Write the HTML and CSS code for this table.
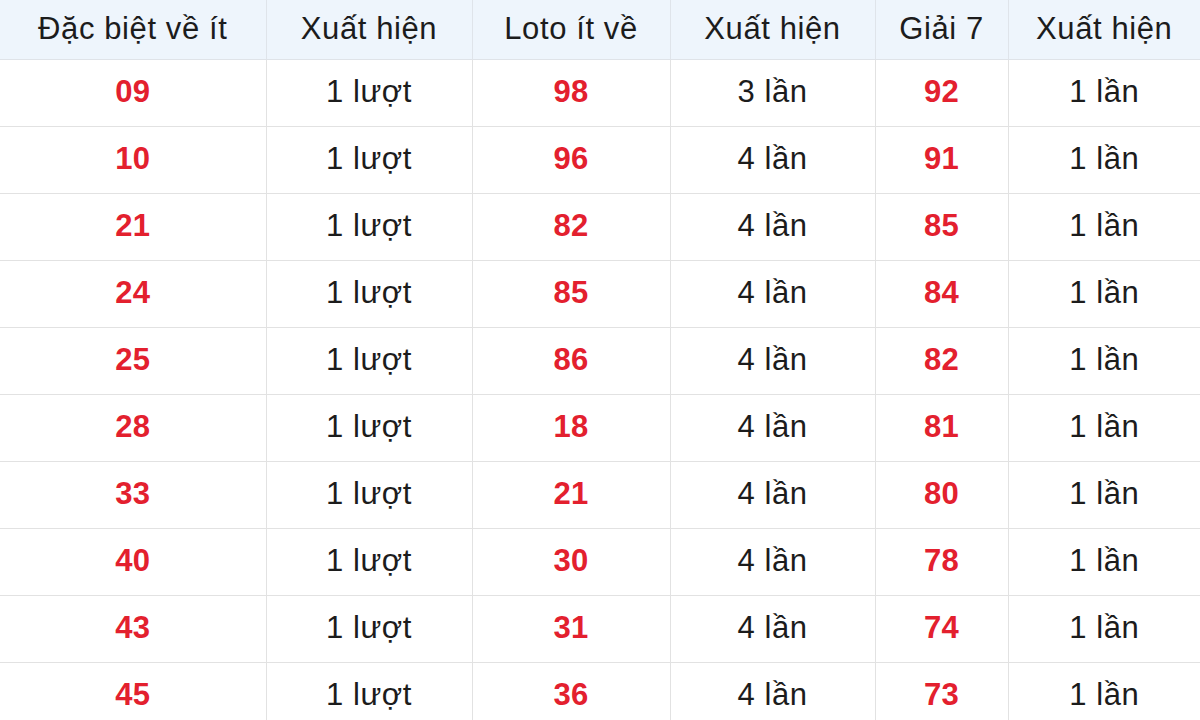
FILE: index.html
```html
<!DOCTYPE html>
<html lang="vi">
<head>
<meta charset="utf-8">
<link rel="stylesheet" href="styles.css">
</head>
<body>
<table class="stats">
  <colgroup>
    <col class="c1"><col class="c2"><col class="c3"><col class="c4"><col class="c5"><col class="c6">
  </colgroup>
  <thead>
    <tr><th>Đặc biệt về ít</th><th>Xuất hiện</th><th>Loto ít về</th><th>Xuất hiện</th><th>Giải 7</th><th>Xuất hiện</th></tr>
  </thead>
  <tbody>
    <tr><td class="num">09</td><td>1 lượt</td><td class="num">98</td><td>3 lần</td><td class="num">92</td><td>1 lần</td></tr>
    <tr><td class="num">10</td><td>1 lượt</td><td class="num">96</td><td>4 lần</td><td class="num">91</td><td>1 lần</td></tr>
    <tr><td class="num">21</td><td>1 lượt</td><td class="num">82</td><td>4 lần</td><td class="num">85</td><td>1 lần</td></tr>
    <tr><td class="num">24</td><td>1 lượt</td><td class="num">85</td><td>4 lần</td><td class="num">84</td><td>1 lần</td></tr>
    <tr><td class="num">25</td><td>1 lượt</td><td class="num">86</td><td>4 lần</td><td class="num">82</td><td>1 lần</td></tr>
    <tr><td class="num">28</td><td>1 lượt</td><td class="num">18</td><td>4 lần</td><td class="num">81</td><td>1 lần</td></tr>
    <tr><td class="num">33</td><td>1 lượt</td><td class="num">21</td><td>4 lần</td><td class="num">80</td><td>1 lần</td></tr>
    <tr><td class="num">40</td><td>1 lượt</td><td class="num">30</td><td>4 lần</td><td class="num">78</td><td>1 lần</td></tr>
    <tr><td class="num">43</td><td>1 lượt</td><td class="num">31</td><td>4 lần</td><td class="num">74</td><td>1 lần</td></tr>
    <tr><td class="num">45</td><td>1 lượt</td><td class="num">36</td><td>4 lần</td><td class="num">73</td><td>1 lần</td></tr>
  </tbody>
</table>
</body>
</html>
```

FILE: styles.css
```css
html, body {
  margin: 0;
  padding: 0;
  background: #ffffff;
  overflow: hidden;
}
body {
  width: 1200px;
  height: 720px;
  font-family: "Liberation Sans", Arial, sans-serif;
}
.stats {
  width: 1200px;
  border-collapse: collapse;
  table-layout: fixed;
  font-size: 31px;
  line-height: 36px;
  color: #1c1c1c;
}
.c1 { width: 266px; }
.c2 { width: 206px; }
.c3 { width: 198px; }
.c4 { width: 205px; }
.c5 { width: 133px; }
.c6 { width: 192px; }
.stats th {
  height: 57px;
  padding: 0 0 2px;
  font-weight: normal;
  background: #eef5fc;
  border-right: 1px solid #dfe4ea;
  border-bottom: 1px solid #dfe3e8;
  text-align: center;
  vertical-align: middle;
  letter-spacing: 0.6px;
}
.stats td {
  height: 64px;
  padding: 0 0 2px;
  text-align: center;
  vertical-align: middle;
  border-right: 1px solid #e2e2e2;
  border-bottom: 1px solid #e2e2e2;
  letter-spacing: 0.6px;
}
.stats th:last-child, .stats td:last-child {
  border-right: none;
}
.stats td.num {
  color: #e3202e;
  font-weight: bold;
  letter-spacing: 0.3px;
}
```
